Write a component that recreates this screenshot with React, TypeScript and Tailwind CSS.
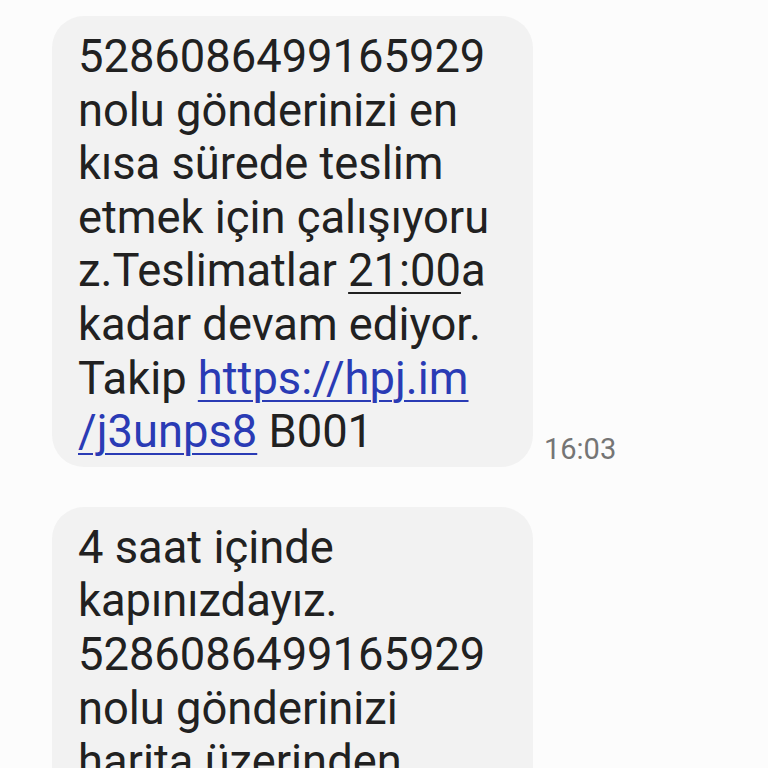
function Link({ children }: { children: React.ReactNode }) {
  return <span className="text-[#2a3bb5] underline decoration-2 underline-offset-[6px]">{children}</span>;
}

function Bubble({ children }: { children: React.ReactNode }) {
  return (
    <div className="w-[481px] shrink-0 rounded-[32px] bg-[#f2f2f2] pl-[26px] pr-[16px] pt-[14px] pb-[8px] text-[45.3px] leading-[53.6px] text-[#212121]">
      {children}
    </div>
  );
}

export default function App() {
  return (
    <div
      className="w-[768px] h-[768px] overflow-hidden bg-[#fcfcfc] pl-[52px] pt-[16px]"
      style={{ fontFamily: "Roboto, 'Noto Sans', sans-serif" }}
    >
      <div className="flex items-end">
        <Bubble>
          5286086499165929
          <br />
          nolu gönderinizi en
          <br />
          kısa sürede teslim
          <br />
          etmek için çalışıyoru
          <br />
          z.Teslimatlar <span className="underline decoration-2 underline-offset-[6px]">21:00</span>a
          <br />
          kadar devam ediyor.
          <br />
          Takip <Link>https://hpj.im</Link>
          <br />
          <Link>/j3unps8</Link> B001
        </Bubble>
        <div className="ml-[11px] mb-0 text-[29px] leading-[36px] text-[#757575]">16:03</div>
      </div>

      <div className="mt-[40px]">
        <Bubble>
          4 saat içinde
          <br />
          kapınızdayız.
          <br />
          5286086499165929
          <br />
          nolu gönderinizi
          <br />
          harita üzerinden
          <br />
          takip edin.
        </Bubble>
      </div>
    </div>
  );
}
